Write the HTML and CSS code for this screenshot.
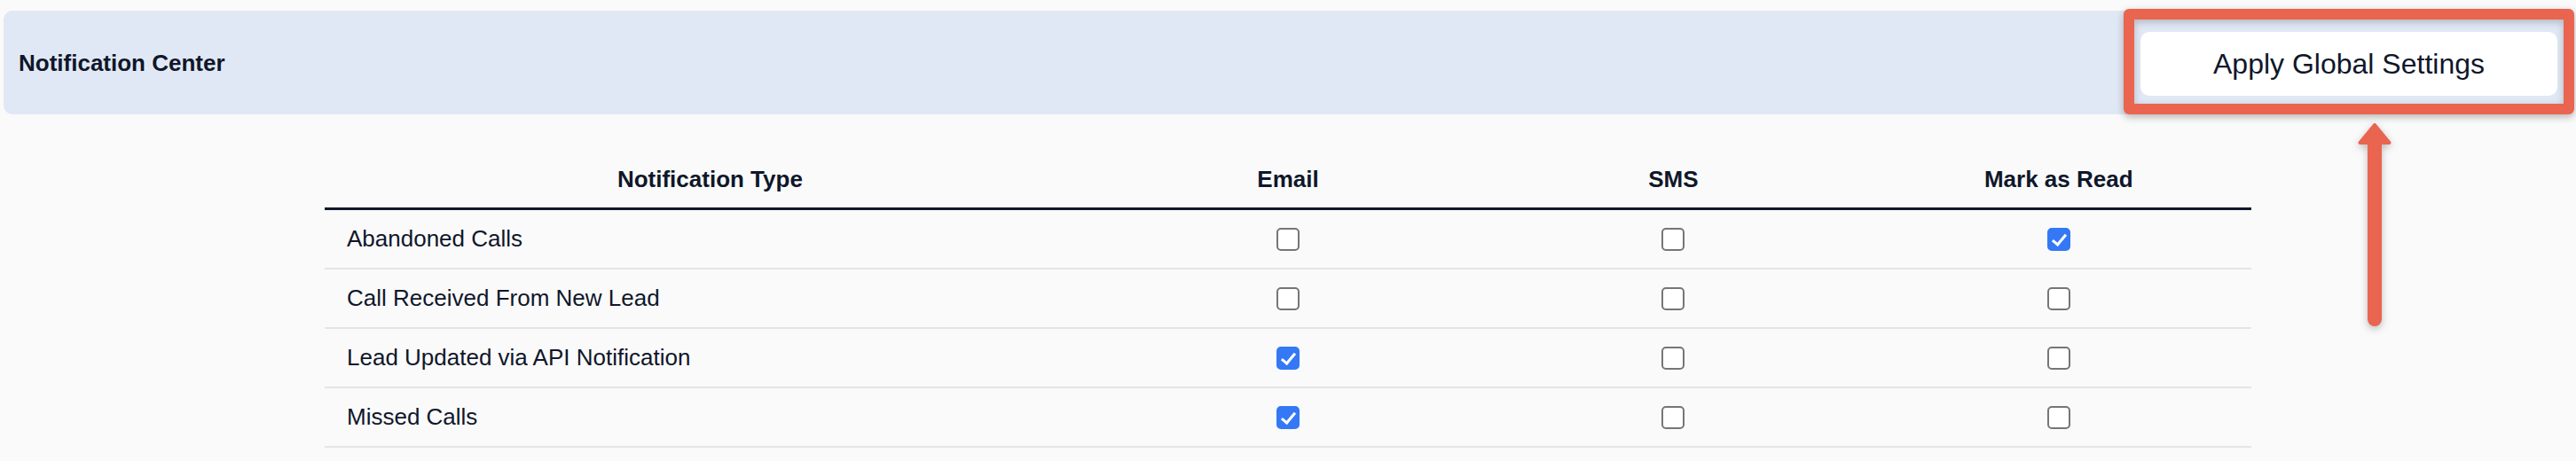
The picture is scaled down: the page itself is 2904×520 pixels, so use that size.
FILE: index.html
```html
<!DOCTYPE html>
<html lang="en">
<head>
<meta charset="utf-8">
<title>Notification Center</title>
<link rel="stylesheet" href="styles.css">
</head>
<body>
<header class="panel">
  <h1 class="title">Notification Center</h1>
  <div class="action">
    <button class="btn" type="button">Apply Global Settings</button>
    <span class="highlight"></span>
    <svg class="arrow" width="54" height="244" viewBox="0 0 54 244" aria-hidden="true">
      <polygon points="27,9 10.5,29 43.5,29" fill="#e9654f" stroke="#e9654f" stroke-width="4" stroke-linejoin="round"/>
      <line x1="27" y1="26" x2="27" y2="228" stroke="#e9654f" stroke-width="16" stroke-linecap="round"/>
    </svg>
  </div>
</header>
<main class="content">
  <table class="grid">
    <colgroup>
      <col class="col-type">
      <col class="col-opt">
      <col class="col-opt">
      <col class="col-opt">
    </colgroup>
    <thead>
      <tr>
        <th>Notification Type</th>
        <th>Email</th>
        <th>SMS</th>
        <th>Mark as Read</th>
      </tr>
    </thead>
    <tbody>
      <tr>
        <td class="name">Abandoned Calls</td>
        <td class="opt"><input class="check" type="checkbox" aria-label="Email"></td>
        <td class="opt"><input class="check" type="checkbox" aria-label="SMS"></td>
        <td class="opt"><input class="check" type="checkbox" aria-label="Mark as Read" checked></td>
      </tr>
      <tr>
        <td class="name">Call Received From New Lead</td>
        <td class="opt"><input class="check" type="checkbox" aria-label="Email"></td>
        <td class="opt"><input class="check" type="checkbox" aria-label="SMS"></td>
        <td class="opt"><input class="check" type="checkbox" aria-label="Mark as Read"></td>
      </tr>
      <tr>
        <td class="name">Lead Updated via API Notification</td>
        <td class="opt"><input class="check" type="checkbox" aria-label="Email" checked></td>
        <td class="opt"><input class="check" type="checkbox" aria-label="SMS"></td>
        <td class="opt"><input class="check" type="checkbox" aria-label="Mark as Read"></td>
      </tr>
      <tr>
        <td class="name">Missed Calls</td>
        <td class="opt"><input class="check" type="checkbox" aria-label="Email" checked></td>
        <td class="opt"><input class="check" type="checkbox" aria-label="SMS"></td>
        <td class="opt"><input class="check" type="checkbox" aria-label="Mark as Read"></td>
      </tr>
    </tbody>
  </table>
</main>
</body>
</html>
```

FILE: styles.css
```css
html, body {
  background: #fafafa;
}

body {
  margin: 0;
  padding: 12px 4px 0;
  font-family: "Liberation Sans", Arial, sans-serif;
  color: #0f172a;
}

.panel {
  box-sizing: border-box;
  display: flex;
  align-items: center;
  justify-content: space-between;
  height: 117px;
  padding: 0 17px;
  background: #e1e8f5;
  border-radius: 10px;
}

.title {
  margin: 0;
  font-size: 26px;
  font-weight: 700;
  line-height: 30px;
}

.action {
  position: relative;
  margin-top: 3px;
}

.btn {
  display: block;
  width: 470px;
  height: 72px;
  padding: 0;
  background: #ffffff;
  border: 0;
  border-radius: 10px;
  font-family: "Liberation Sans", Arial, sans-serif;
  font-size: 32px;
  color: #0f172a;
}

.highlight {
  position: absolute;
  left: -19px;
  right: -19px;
  top: -26px;
  bottom: -21px;
  border: 12px solid #e9654f;
  border-radius: 6px;
  box-shadow: 0 3px 8px rgba(0, 0, 0, 0.28), inset 0 3px 8px rgba(0, 0, 0, 0.22);
  pointer-events: none;
}

.arrow {
  position: absolute;
  left: 237px;
  top: 96px;
  filter: drop-shadow(0 3px 4px rgba(0, 0, 0, 0.25));
}

.content {
  padding-top: 38px;
}

.grid {
  width: 75%;
  margin: 0 auto;
  border-collapse: collapse;
  table-layout: fixed;
}

.col-type {
  width: 40%;
}

.col-opt {
  width: 20%;
}

.grid th {
  padding: 20px 24px 17px;
  font-size: 26px;
  font-weight: 700;
  line-height: 30px;
  text-align: center;
  border-bottom: 3px solid #0f172a;
}

.grid td {
  padding: 17px 25px;
  font-size: 26px;
  line-height: 31px;
  border-bottom: 2px solid #e5e5e5;
  vertical-align: middle;
}

.name {
  text-align: left;
}

.opt {
  text-align: center;
}

.check {
  -webkit-appearance: none;
  appearance: none;
  position: relative;
  display: block;
  box-sizing: border-box;
  width: 26px;
  height: 26px;
  margin: 0 auto;
  background: #ffffff;
  border: 2px solid #767676;
  border-radius: 5px;
}

.check:checked {
  background: #3478f6;
  border-color: #3478f6;
}

.check:checked::after {
  content: "";
  position: absolute;
  left: 7px;
  top: 2px;
  width: 6px;
  height: 13px;
  border-right: 3.5px solid #ffffff;
  border-bottom: 3.5px solid #ffffff;
  transform: rotate(40deg);
}
```
